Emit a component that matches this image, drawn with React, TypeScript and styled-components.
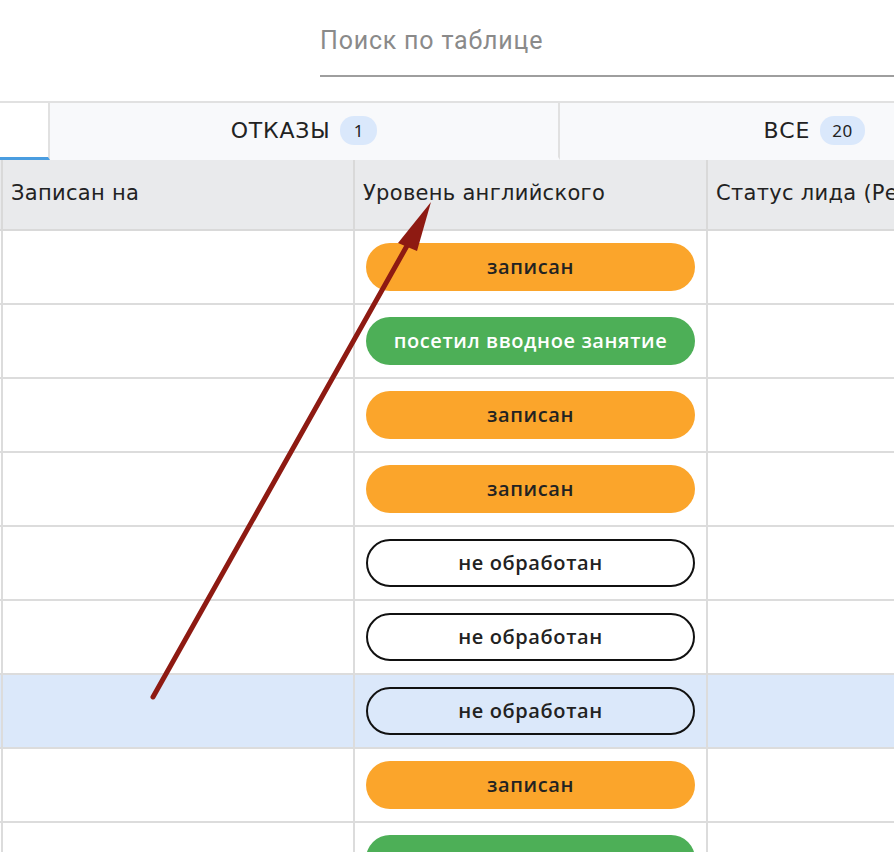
import React from "react";
import styled, { createGlobalStyle } from "styled-components";

const Global = createGlobalStyle`
  html, body { margin: 0; padding: 0; background: #fff; }
  body { font-family: "DejaVu Sans", "Noto Sans", sans-serif; overflow: hidden; }
`;

const Page = styled.div`
  position: relative;
  width: 894px;
  height: 852px;
  overflow: hidden;
  background: #fff;
`;

const SearchBar = styled.div`
  height: 101px;
  display: flex;
  padding-left: 320px;
  box-sizing: border-box;
`;

const SearchField = styled.div`
  flex: 1;
  height: 77px;
  border-bottom: 2px solid #9e9e9e;
  display: flex;
  align-items: center;
  box-sizing: border-box;
  padding-top: 6px;
  font-family: Roboto, "Liberation Sans", sans-serif;
  font-size: 25px;
  letter-spacing: 0.8px;
  color: #8a8a8a;
`;

const Tabs = styled.div`
  display: flex;
  height: 59px;
  border-top: 2px solid #e1e1e1;
  box-sizing: border-box;
  width: 1100px;
`;

const Tab = styled.div<{ $active?: boolean; $w: number }>`
  width: ${(p) => p.$w}px;
  flex: none;
  box-sizing: border-box;
  background: ${(p) => (p.$active ? "#fff" : "#f8f9fb")};
  border-right: 2px solid #e1e1e1;
  border-bottom: 3px solid ${(p) => (p.$active ? "#4a9de0" : "#f8f9fb")};
  display: flex;
  align-items: center;
  justify-content: center;
  gap: 10px;
  font-family: "DejaVu Sans", sans-serif;
  font-size: 22px;
  color: #222;
  letter-spacing: 0.8px;
`;

const Badge = styled.span`
  background: #dae8fb;
  border-radius: 14px;
  height: 29px;
  min-width: 13px;
  padding: 0 12px;
  display: inline-flex;
  align-items: center;
  justify-content: center;
  font-family: "Noto Sans", sans-serif;
  font-size: 17px;
  letter-spacing: 0.5px;
  color: #222;
`;

const Grid = styled.div`
  display: grid;
  grid-template-columns: 3px 352px 353px 300px;
  width: 1008px;
`;

const HeadCell = styled.div`
  height: 71px;
  box-sizing: border-box;
  background: #e9eaec;
  border-right: 2px solid #d9d9d9;
  border-bottom: 2px solid #d9d9d9;
  display: flex;
  align-items: center;
  padding-left: 8px;
  padding-bottom: 3px;
  font-family: "DejaVu Sans", sans-serif;
  font-size: 21px;
  letter-spacing: 0.3px;
  color: #222;
  white-space: nowrap;
  overflow: hidden;
`;

const Cell = styled.div<{ $hl?: boolean }>`
  height: 74px;
  box-sizing: border-box;
  background: ${(p) => (p.$hl ? "#dbe8fa" : "#fff")};
  border-right: 2px solid #dcdcdc;
  border-bottom: 2px solid #dcdcdc;
  display: flex;
  align-items: center;
  padding: 0 10px 0 11px;
`;

type Kind = "orange" | "green" | "outline";

const Pill = styled.div<{ $kind: Kind }>`
  width: 329px;
  height: 48px;
  box-sizing: border-box;
  border-radius: 24px;
  display: flex;
  align-items: center;
  justify-content: center;
  font-family: "Open Sans", "Noto Sans", sans-serif;
  font-weight: 600;
  font-size: 20px;
  letter-spacing: 0.6px;
  background: ${(p) =>
    p.$kind === "orange" ? "#fba52b" : p.$kind === "green" ? "#4daf57" : "transparent"};
  color: ${(p) => (p.$kind === "green" ? "#fff" : "#222")};
  border: ${(p) => (p.$kind === "outline" ? "2px solid #111" : "none")};
  padding-bottom: 2px;
`;

const Arrow = styled.svg`
  position: absolute;
  left: 0;
  top: 0;
  pointer-events: none;
`;

const rows: { text: string; kind: Kind; hl?: boolean }[] = [
  { text: "записан", kind: "orange" },
  { text: "посетил вводное занятие", kind: "green" },
  { text: "записан", kind: "orange" },
  { text: "записан", kind: "orange" },
  { text: "не обработан", kind: "outline" },
  { text: "не обработан", kind: "outline" },
  { text: "не обработан", kind: "outline", hl: true },
  { text: "записан", kind: "orange" },
  { text: "посетил вводное занятие", kind: "green" },
];

export default function App() {
  return (
    <Page>
      <Global />
      <SearchBar>
        <SearchField>Поиск по таблице</SearchField>
      </SearchBar>
      <Tabs>
        <Tab $active $w={50} />
        <Tab $w={510}>
          ОТКАЗЫ <Badge>1</Badge>
        </Tab>
        <Tab $w={510}>
          ВСЕ <Badge>20</Badge>
        </Tab>
      </Tabs>
      <Grid>
        <HeadCell style={{ paddingLeft: 0 }} />
        <HeadCell>Записан на</HeadCell>
        <HeadCell>Уровень английского</HeadCell>
        <HeadCell>Статус лида (Респондент)</HeadCell>
        {rows.map((r, i) => (
          <React.Fragment key={i}>
            <Cell $hl={r.hl} style={{ padding: 0 }} />
            <Cell $hl={r.hl} />
            <Cell $hl={r.hl}>
              <Pill $kind={r.kind}>{r.text}</Pill>
            </Cell>
            <Cell $hl={r.hl} />
          </React.Fragment>
        ))}
      </Grid>
      <Arrow width="894" height="852" viewBox="0 0 894 852">
        <line x1="153" y1="697" x2="408" y2="244" stroke="#8e1a12" strokeWidth="5" strokeLinecap="round" />
        <polygon points="431,202 398,243 417,251" fill="#8e1a12" />
      </Arrow>
    </Page>
  );
}
